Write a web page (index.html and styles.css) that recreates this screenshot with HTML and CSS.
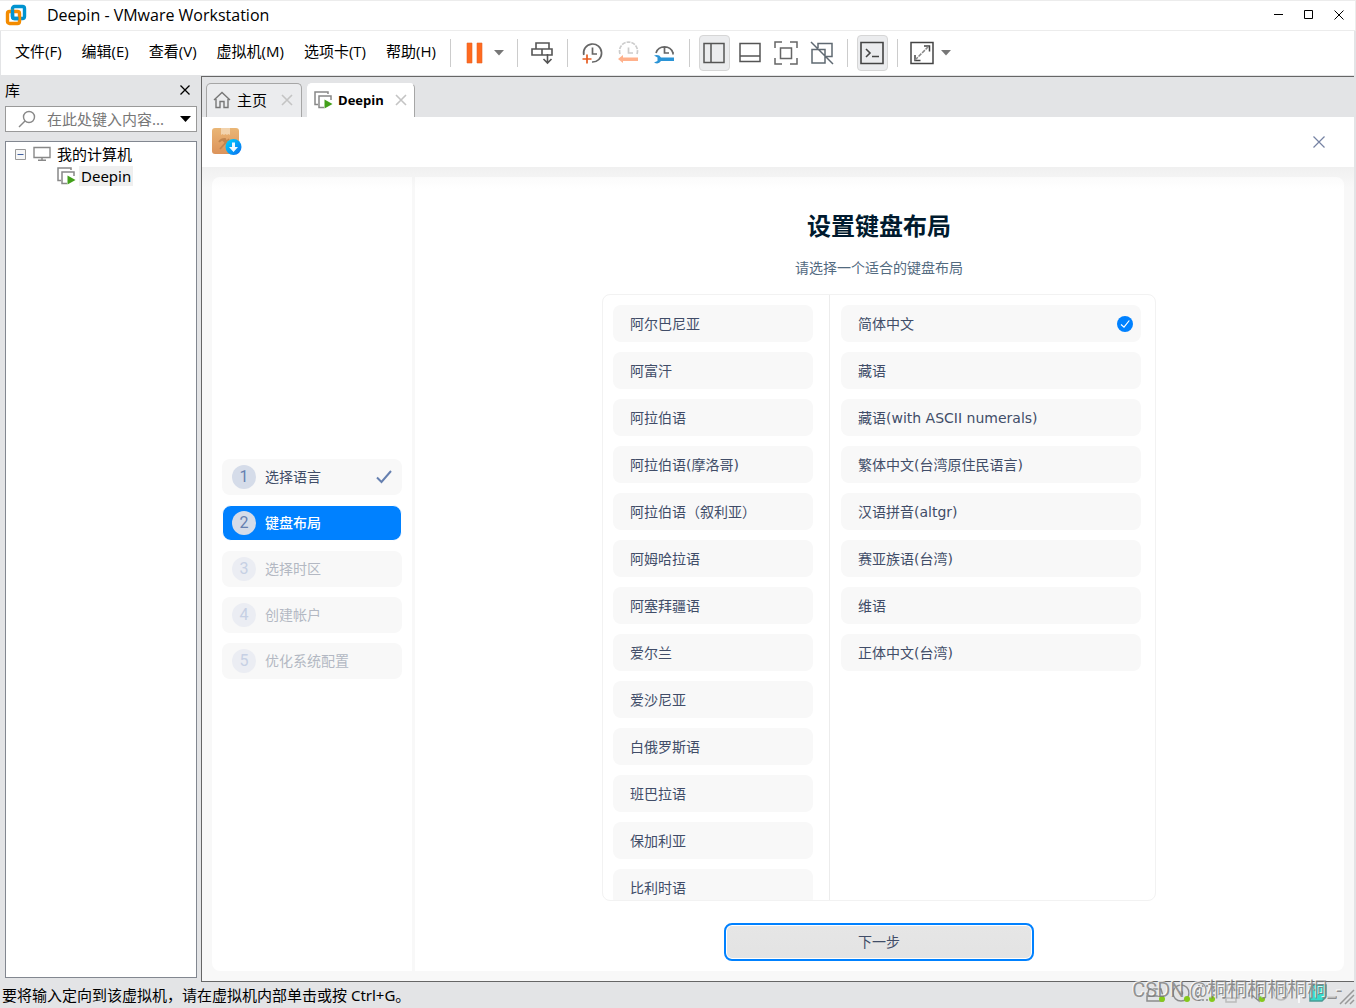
FILE: index.html
```html
<!DOCTYPE html>
<html lang="zh-CN">
<head>
<meta charset="utf-8">
<title>Deepin - VMware Workstation</title>
<link rel="stylesheet" href="styles.css">
</head>
<body>
<div class="window">
  <header class="titlebar">
    <svg class="logo" width="22" height="22" viewBox="0 0 22 22" fill="none" stroke-width="3.400"><rect x="7.5" y="2.500" width="12" height="12" rx="2" stroke="#0093d0"/><rect x="2.500" y="7.500" width="12" height="12" rx="2" stroke="#f38b00"/><path d="M7.500 6v6q0 2.500 2 2.500h4" stroke="#0093d0"/></svg>
    <h1 class="window-title">Deepin - VMware Workstation</h1>
    <div class="window-controls">
      <button class="control" aria-label="最小化"><svg width="10" height="10" viewBox="0 0 10 10"><path d="M0 4.500h9" stroke="#000"/></svg></button>
      <button class="control" aria-label="最大化"><svg width="10" height="10" viewBox="0 0 10 10"><path d="M.5 .5h8v8h-8z" fill="none" stroke="#000"/></svg></button>
      <button class="control" aria-label="关闭"><svg width="10" height="10" viewBox="0 0 10 10"><path d="M.5 .5l9 9m0-9l-9 9" stroke="#000"/></svg></button>
    </div>
  </header>

  <div class="menubar">
    <nav class="menus">
      <button class="menu">文件(F)</button>
      <button class="menu">编辑(E)</button>
      <button class="menu">查看(V)</button>
      <button class="menu">虚拟机(M)</button>
      <button class="menu">选项卡(T)</button>
      <button class="menu">帮助(H)</button>
    </nav>
    <div class="toolbar">
      <span class="separator"></span>
      <button class="tool" aria-label="挂起"><svg width="24" height="24" viewBox="0 0 24 24"><path d="M4 2h5v20H4zM14 2h5v20h-5z" fill="#ff6a1f" stroke="#e5662a" stroke-width=".6"/></svg></button>
      <button class="tool-caret" aria-label="电源选项"><svg width="10" height="6" viewBox="0 0 10 6"><path d="M0 0h10L5 5.500z" fill="#777"/></svg></button>
      <span class="separator"></span>
      <button class="tool" aria-label="发送 Ctrl+Alt+Del"><svg width="24" height="24" viewBox="0 0 24 24" fill="none" stroke="#555" stroke-width="1.600"><path d="M6 2h13v6H6zM2 8h10v6H2zM12 8h10v6H12zM17.500 13v9M13.500 18l4 4 4-4" /></svg></button>
      <span class="separator"></span>
      <button class="tool" aria-label="拍摄快照"><svg width="24" height="24" viewBox="0 0 24 24" fill="none" stroke="#666" stroke-width="1.700"><path d="M3.800 14A9 9 0 1 1 12 21M12.500 6.500V13H17"/><path d="M7 13.500v9M2.500 18h9" stroke="#e65c20"/></svg></button>
      <button class="tool" aria-label="恢复快照"><svg width="24" height="24" viewBox="0 0 24 24" fill="none" stroke="#ccc" stroke-width="1.700"><path d="M4 13A9 9 0 1 1 21 13" stroke-dasharray="4 1"/><path d="M12.500 6.500V12H17"/><path d="M2 18l5-4v2.500h15v3.500H7V22z" fill="#ffb18c" stroke="none"/></svg></button>
      <button class="tool" aria-label="管理快照"><svg width="24" height="24" viewBox="0 0 24 24" fill="none" stroke="#666" stroke-width="1.700"><path d="M4 12A9 9 0 0 1 21 12M21 11v2.500M12.500 6.500V12H17"/><path d="M2 14.500q5-1.500 7 2h13v3.500H9q-2.500 4-7 1.500l3.500-1.500v-3.500z" fill="#2b94d6" stroke="none"/></svg></button>
      <span class="separator"></span>
      <button class="tool tool-on" aria-label="显示库"><svg width="24" height="24" viewBox="0 0 24 24" fill="none" stroke="#555" stroke-width="1.500"><path d="M2 2.500h20v19H2zM9 2.500v19"/></svg></button>
      <button class="tool" aria-label="显示缩略图栏"><svg width="24" height="24" viewBox="0 0 24 24" fill="none" stroke="#555" stroke-width="1.500"><path d="M2 2.500h20v18H2zM2 15h20"/></svg></button>
      <button class="tool" aria-label="全屏"><svg width="24" height="24" viewBox="0 0 24 24" fill="none" stroke="#666" stroke-width="1.500"><path d="M6.500 7h11v10.500h-11zM1 7V1h7M16 1h7v6M23 17v6h-7M8 23H1v-6"/></svg></button>
      <button class="tool" aria-label="Unity 模式"><svg width="24" height="24" viewBox="0 0 24 24" fill="none" stroke="#5f6972" stroke-width="1.500"><path d="M8 7V2.500h14v13h-6M2 8.500h13V22H2zM1 1l22 22"/></svg></button>
      <span class="separator"></span>
      <button class="tool tool-on" aria-label="控制台视图"><svg width="24" height="24" viewBox="0 0 24 24" fill="none" stroke="#444" stroke-width="1.600"><path d="M1 1.500h22v21H1z"/><path d="M6 8l4 4-4 4M12 15.500h7"/></svg></button>
      <span class="separator"></span>
      <button class="tool" aria-label="拉伸客户机"><svg width="24" height="24" viewBox="0 0 24 24" fill="none" stroke="#444" stroke-width="1.500"><path d="M1 1.500h22v21H1z"/><path d="M14 5h5.500v5.500M5 14v5.500h5.500"/><path d="M5 19L19 5" stroke="#888" stroke-dasharray="4 1"/></svg></button>
      <button class="tool-caret" aria-label="拉伸选项"><svg width="10" height="6" viewBox="0 0 10 6"><path d="M0 0h10L5 5.500z" fill="#777"/></svg></button>
    </div>
  </div>

  <div class="workspace">
    <aside class="library">
      <div class="library-head">
        <h2 class="library-title">库</h2>
        <button class="library-close" aria-label="关闭库"><svg width="10" height="10" viewBox="0 0 10 10"><path d="M.5 .5l9 9m0-9l-9 9" stroke="#000" stroke-width="1.300"/></svg></button>
      </div>
      <div class="search">
        <svg width="18" height="18" viewBox="0 0 18 18" fill="none" stroke="#888" stroke-width="1.400"><circle cx="11" cy="7" r="5.500"/><path d="M7 11l-6 6"/></svg>
        <input class="search-input" type="text" aria-label="搜索库" placeholder="在此处键入内容...">
        <button class="search-caret" aria-label="搜索选项"><svg width="11" height="6" viewBox="0 0 11 6"><path d="M0 0h11L5.500 6z"/></svg></button>
      </div>
      <ul class="tree">
        <li class="tree-row">
          <svg width="11" height="11" viewBox="0 0 11 11"><path d="M.5 .5h10v10H.5z" fill="#f6f6f6" stroke="#999"/><path d="M2.500 5.500h6" stroke="#4060a0"/></svg>
          <svg class="tree-computer" width="18" height="16" viewBox="0 0 18 16" fill="none" stroke="#888" stroke-width="1.400"><path d="M1 1.500h16v10H1zM9 12v2M5 14.300h8"/></svg>
          <span>我的计算机</span>
        </li>
        <li class="tree-row tree-child">
          <svg width="19" height="18" viewBox="0 0 19 18" fill="none" stroke="#888" stroke-width="1.500"><path d="M4 13.500H1V1h13v2M10 16.500H5V5h12v4"/><path d="M10.500 8.500l8 4.500-8 4.500z" fill="#43a01a" stroke="none"/></svg>
          <span class="tree-vm">Deepin</span>
        </li>
      </ul>
    </aside>

    <main class="console">
      <div class="tabs">
        <div class="tab">
          <svg width="18" height="18" viewBox="0 0 18 18" fill="none" stroke="#777" stroke-width="1.400"><path d="M1 9l8-7.500L17 9M3 8v8.500h4v-6h4v6h4V8"/></svg>
          <button class="tab-name">主页</button>
          <button class="tab-close" aria-label="关闭主页"><svg width="12" height="12" viewBox="0 0 12 12"><path d="M1 1l10 10m0-10L1 11" stroke="#c4c4c4" stroke-width="1.600"/></svg></button>
        </div>
        <div class="tab tab-active">
          <svg width="19" height="18" viewBox="0 0 19 18" fill="none" stroke="#888" stroke-width="1.500"><path d="M4 13.500H1V1h13v2M10 16.500H5V5h12v4"/><path d="M10.500 8.500l8 4.500-8 4.500z" fill="#43a01a" stroke="none"/></svg>
          <button class="tab-name">Deepin</button>
          <button class="tab-close" aria-label="关闭 Deepin"><svg width="12" height="12" viewBox="0 0 12 12"><path d="M1 1l10 10m0-10L1 11" stroke="#c4c4c4" stroke-width="1.600"/></svg></button>
        </div>
      </div>

      <div class="guest">
        <div class="installer-head">
          <svg width="30" height="28" viewBox="0 0 30 28">
            <defs><linearGradient id="box" x2="0" y2="1"><stop offset="0" stop-color="#eab676"/><stop offset="1" stop-color="#dc935a"/></linearGradient><linearGradient id="ball" x2="1" y2="1"><stop offset="0" stop-color="#00d5ff"/><stop offset="1" stop-color="#0a6cf0"/></linearGradient></defs>
            <rect width="27" height="26" rx="3" fill="url(#box)"/>
            <path d="M9 0h9v7l-1.500-1L15 7l-1.500-1L12 7l-1.500-1L9 7z" fill="#f2d3ad"/>
            <path d="M7 14q2-3 6-3l1 2M11 12l9 9M17 11l-9 10" fill="none" stroke="#c0854f" stroke-width="1.800"/>
            <circle cx="21.500" cy="19" r="8" fill="url(#ball)"/>
            <path d="M20 14.500h3V19h3l-4.500 5-4.500-5h3z" fill="#f2f8ff"/>
          </svg>
          <button class="installer-close" aria-label="退出安装"><svg width="12" height="12" viewBox="0 0 12 12"><path d="M.5 .5l11 11m0-11l-11 11" stroke="#7582a3" stroke-width="1.200"/></svg></button>
        </div>
        <div class="installer">
          <ol class="steps">
            <li class="step step-done"><span class="step-number">1</span><span>选择语言</span><svg class="step-check" width="16" height="14" viewBox="0 0 16 14"><path d="M1 7.500l4.500 4.500L15 1" fill="none" stroke="#6680b0" stroke-width="2"/></svg></li>
            <li class="step step-current"><span class="step-number">2</span><span>键盘布局</span></li>
            <li class="step"><span class="step-number">3</span><span>选择时区</span></li>
            <li class="step"><span class="step-number">4</span><span>创建帐户</span></li>
            <li class="step"><span class="step-number">5</span><span>优化系统配置</span></li>
          </ol>
          <section class="page">
            <h2 class="page-title">设置键盘布局</h2>
            <p class="page-hint">请选择一个适合的键盘布局</p>
            <div class="layouts">
              <div class="column column-language">
                <button class="option">阿尔巴尼亚</button>
                <button class="option">阿富汗</button>
                <button class="option">阿拉伯语</button>
                <button class="option">阿拉伯语(摩洛哥)</button>
                <button class="option">阿拉伯语（叙利亚）</button>
                <button class="option">阿姆哈拉语</button>
                <button class="option">阿塞拜疆语</button>
                <button class="option">爱尔兰</button>
                <button class="option">爱沙尼亚</button>
                <button class="option">白俄罗斯语</button>
                <button class="option">班巴拉语</button>
                <button class="option">保加利亚</button>
                <button class="option">比利时语</button>
              </div>
              <div class="column column-variant">
                <button class="option">简体中文<svg width="16" height="16" viewBox="0 0 16 16"><circle cx="8" cy="8" r="8" fill="#0081ff"/><path d="M4 8.500L7 11.200 12.300 4.500" fill="none" stroke="#fff" stroke-width="1.200"/></svg></button>
                <button class="option">藏语</button>
                <button class="option">藏语(with ASCII numerals)</button>
                <button class="option">繁体中文(台湾原住民语言)</button>
                <button class="option">汉语拼音(altgr)</button>
                <button class="option">赛亚族语(台湾)</button>
                <button class="option">维语</button>
                <button class="option">正体中文(台湾)</button>
              </div>
            </div>
            <button class="next">下一步</button>
          </section>
        </div>
      </div>
    </main>
  </div>

  <footer class="statusbar">
    <span>要将输入定向到该虚拟机，请在虚拟机内部单击或按 Ctrl+G。</span>
    <svg width="210" height="24" viewBox="0 0 210 24" fill="none" stroke="#8c8c8c" stroke-width="1.500">
      <path d="M4 6h12l2 7v5H2v-5zM2 13h16"/><circle cx="36" cy="10" r="8"/><circle cx="36" cy="10" r="1.500"/>
      <path d="M53 3h16v14H53z" stroke-dasharray="2 2"/><path d="M78 7h16v8H78zM82 7V2h8v5M81 15v4h10v-4" stroke="#bbb"/>
      <path d="M104 7h4l6-5v16l-6-5h-4z"/><circle cx="136" cy="10" r="7" stroke="#bbb"/><path d="M154 2v18" stroke="#fff"/>
      <path d="M165 4l4-2h12v12l-4 4h-12z" fill="#36dccb" stroke="#4b9994"/><path d="M182 14h10" stroke="#999"/>
      <g fill="#84c91c" stroke="none"><circle cx="17" cy="16" r="3"/><circle cx="42" cy="16" r="3"/><circle cx="67" cy="16" r="3"/><circle cx="117" cy="16" r="3"/></g>
      <path d="M195 21L209 7M200 21l9-9M205 21l4-4" stroke="#999"/>
    </svg>
    <div class="watermark">CSDN @桐桐桐桐桐桐_-</div>
  </footer>
</div>
</body>
</html>
```

FILE: styles.css
```css
* { box-sizing: border-box; }

body {
  margin: 0;
  background: #e3e4e6;
  color: #000;
  font: 15px/20px "Noto Sans", "Noto Sans CJK SC", sans-serif;
}

button, input { font: inherit; color: inherit; border: 0; padding: 0; background: none; }
button { display: flex; align-items: center; justify-content: center; }
h1, h2, p, ul, ol { margin: 0; padding: 0; font-size: inherit; font-weight: 400; list-style: none; }
svg { flex: none; display: block; }

.window { display: flex; flex-direction: column; height: 100vh; }

/* Title bar */
.titlebar {
  display: flex;
  align-items: center;
  height: 31px;
  padding: 0 1px 2px 5px;
  background: #fff;
  border: 1px solid #ececec;
  border-width: 1px 1px 1px 0;
}
.window-title { margin-left: 20px; font: 16px/20px "Open Sans", sans-serif; }
.window-controls { display: flex; margin-left: auto; }
.control { width: 30px; height: 28px; }

/* Menus and tools */
.menubar {
  display: flex;
  align-items: center;
  height: 45px;
  padding-left: 14px;
  padding-bottom: 1px;
  background: #fff;
  border: solid #e3e4e6;
  border-width: 0 2px 1px 1px;
}
.menus { display: flex; gap: 20px; margin-right: 10px; padding-bottom: 4px; font-family: "Open Sans", "Noto Sans CJK SC", sans-serif; }
.menu { white-space: nowrap; }
.toolbar { display: flex; align-items: center; gap: 5px; }
.separator { width: 1px; height: 28px; margin: 0 4px; background: #ccc; }
.tool { width: 31px; height: 36px; border-radius: 4px; }
.tool-on { background: #ebecee; border: 1px solid #d6d6d6; }
.tool-caret { width: 17px; height: 36px; margin-left: -5px; }

.workspace { display: flex; flex: 1; min-height: 0; }

/* Library */
.library { display: flex; flex-direction: column; width: 201px; padding: 4px 4px 4px 5px; }
.library-head { display: flex; align-items: center; justify-content: space-between; height: 20px; margin-bottom: 6px; }
.library-close { width: 24px; height: 20px; }
.search {
  display: flex;
  align-items: center;
  height: 26px;
  padding-left: 12px;
  background: #fff;
  border: 1px solid #999;
}
.search-input { flex: 1; min-width: 0; margin-left: 11px; outline: 0; }
.search-input::placeholder { color: #777; }
.search-caret { width: 22px; height: 24px; }
.tree { flex: 1; margin-top: 9px; padding: 1px 0 0 9px; background: #fff; border: 1px solid #828790; }
.tree-row { display: flex; align-items: center; height: 22px; gap: 6px; }
.tree-computer { margin-left: 1px; }
.tree-child { padding-left: 42px; gap: 3px; }
.tree-vm { padding: 0 2px; background: #efefef; }

/* Console with its tabs */
.console { display: flex; flex: 1; flex-direction: column; min-width: 0; margin-right: 2px; border: 1px solid #666; border-right: 0; }
.tabs { display: flex; gap: 5px; height: 40px; padding: 6px 4px 0; }
.tab {
  display: flex;
  align-items: center;
  gap: 6px;
  padding: 0 8px 2px 6px;
  background: #ebecee;
  border: 1px solid #a6a6a6;
  border-bottom: 0;
  border-radius: 5px 5px 0 0;
}
.tab-close { margin-left: 8px; }
.tab-active { gap: 5px; padding-right: 7px; background: #fff; border-left-color: #fff; border-top-color: #fff; }
.tab-active .tab-name { font: 700 13px/20px "Open Sans", sans-serif; }
.tab-active .tab-close { margin-left: 6px; }

/* Installer shown by the guest */
.guest {
  display: flex;
  flex: 1;
  flex-direction: column;
  min-height: 0;
  background: linear-gradient(#f0f0f0, #f8f8f8 20px) 0 50px no-repeat #fff;
  font: 14px/20px "DejaVu Sans", "Noto Sans CJK SC", sans-serif;
  color: #414d68;
}
.installer-head { display: flex; align-items: center; justify-content: space-between; height: 50px; padding: 0 29px 0 10px; }
.installer { display: flex; flex: 1; gap: 3px; min-height: 0; padding: 10px; }
.steps {
  display: flex;
  flex-direction: column;
  justify-content: center;
  gap: 10px;
  width: 200px;
  padding: 0 10px 10px;
  background: linear-gradient(#fbfbfb, #fff 12px);
  border-radius: 8px 0 0 8px;
}
.step {
  display: flex;
  align-items: center;
  gap: 9px;
  height: 36px;
  padding: 0 10px;
  color: #b3b8c3;
  background: #f8f8f8;
  border-radius: 8px;
}
.step-number {
  width: 24px;
  height: 24px;
  border-radius: 12px;
  background: #ebedf3;
  color: #c6d0e4;
  font: 400 16px/24px Roboto, sans-serif;
  text-align: center;
}
.step-done { color: #414d68; }
.step-done .step-number, .step-current .step-number { background: #d5dce9; color: #6680b0; }
.step-current { color: #fff; font-weight: 500; background: #0081ff; border: 1px solid #fff; padding: 0 9px; border-radius: 9px; }
.step-check { margin-left: auto; }

.page {
  display: flex;
  flex: 1;
  flex-direction: column;
  align-items: center;
  min-width: 0;
  padding: 30px 1px 10px 0;
  background: linear-gradient(#fbfbfb, #fff 12px);
  border-radius: 0 8px 8px 0;
}
.page-title { font: 700 24px/36px "Noto Sans CJK SC", sans-serif; color: #001a2e; }
.page-hint { margin: 15px 0 16px; color: #526a7f; }
.layouts { display: flex; flex: 1; width: 554px; min-height: 0; overflow: hidden; border: 1px solid #f2f2f2; border-radius: 8px; }
.column { display: flex; flex-direction: column; gap: 10px; padding: 10px 0; }
.column-language { width: 226px; padding-left: 10px; }
.column-variant { flex: 1; padding-left: 11px; border-left: 1px solid #ececec; }
.option {
  flex: none;
  justify-content: space-between;
  width: 200px;
  height: 37px;
  padding: 0 8px 0 17px;
  background: #f8f8f8;
  border-radius: 8px;
}
.column-variant .option { width: 300px; }
.next {
  width: 310px;
  height: 38px;
  margin-top: 22px;
  background: linear-gradient(#e6e6e6, #e3e3e3);
  border: 2px solid #0081ff;
  border-radius: 8px;
  box-shadow: inset 0 0 0 1px #fff;
}

/* Status bar */
.statusbar { position: relative; display: flex; align-items: center; justify-content: space-between; height: 26px; padding: 0 1px 0 2px; }
.watermark {
  position: absolute;
  right: 14px;
  bottom: 6px;
  font: 20px/24px Roboto, "Noto Sans CJK SC", sans-serif;
  color: rgba(120, 120, 120, .8);
  text-shadow: -1px -1px 0 rgba(255, 255, 255, .8);
}
```
